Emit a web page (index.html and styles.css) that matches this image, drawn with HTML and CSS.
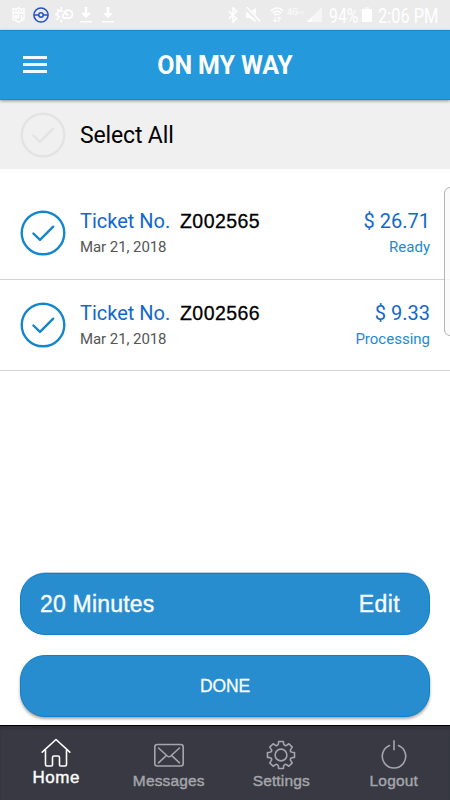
FILE: index.html
```html
<!DOCTYPE html>
<html lang="en">
<head>
<meta charset="utf-8">
<title>On My Way</title>
<link rel="stylesheet" href="styles.css">
</head>
<body>
<svg class="defs" width="0" height="0">
  <symbol id="check" viewBox="0 0 46 46">
    <circle cx="23" cy="23" r="21.3"/>
    <path d="M13.4 23.5l6.6 6.4 13.2-13.2"/>
  </symbol>
  <symbol id="download" viewBox="0 0 12 16">
    <path fill="#fff" d="M4.7 0h2.6v6H11l-5 5.3L1 6h3.7zM0 14h12v1.6H0z"/>
  </symbol>
</svg>
<div class="app">
  <div class="status">
    <svg class="nfl" width="13" height="16" viewBox="0 0 13 16">
      <path d="M1 1.5l3 .8 2.5-1.6L9 2.3l3-.8v11.3l-3 .9-2.5 1.6L4 13.7l-3-.9zM1 6h11M4 3v2M6.5 2.5V5M9 3v2M3 12V8l1.7 4V8M6.2 12V8h1.6M6.2 10h1.4M9.5 8v4h1.5"/>
    </svg>
    <svg class="ball" width="16" height="16" viewBox="0 0 16 16">
      <circle cx="8" cy="8" r="7.1"/><circle cx="8" cy="8" r="2.2"/><path d="M1 8h4.8M10.2 8H15"/>
    </svg>
    <svg class="weather" width="18" height="16" viewBox="0 0 18 16">
      <path d="M8 4.6a3.400 3.400 0 1 0-2.600 5.800M6.300 0v2.200M2 2l1.500 1.500M0 7.500h2M1.800 12.600l1.500-1.500M6.300 12.800V15"/>
      <path d="M7.400 11.200h6a4 4 0 1 0-3.900-4.800M12.500 8.800a2.300 2.300 0 1 0-4.600 0 2.300 2.300 0 0 0 2 2.400"/>
    </svg>
    <svg class="dl" width="12" height="16"><use href="#download"/></svg>
    <svg class="dl" width="12" height="16"><use href="#download"/></svg>
    <div class="status-right">
      <svg width="10" height="16" viewBox="0 0 10 16"><path d="M.8 4.2l7.8 7.3L5 15V1l3.6 3.5L.8 11.8"/></svg>
      <svg class="mute" width="15" height="16" viewBox="0 0 15 16"><path class="solid" d="M0 5h3.5L10 1v14l-6.500-4H0z"/><path class="slash" d="M0 .8l14 14"/><path d="M.7 0l13.5 14.5"/></svg>
      <svg class="wifi" width="14" height="16" viewBox="0 0 14 16"><path d="M.8 4Q7-2 13.200 4M2.800 6.200Q7 2 11.200 6.200M4.800 8.300Q7 6 9.200 8.300"/><path class="thin" d="M5 10v5M3 13l2 2 2-2M9 15v-5M7.500 12L9 10l2 2"/></svg>
      <span class="lte">4G<small>LTE</small></span>
      <svg class="signal" width="15" height="15" viewBox="0 0 15 15"><path class="faint" d="M0 15L15 0v15z"/><path class="solid" d="M0 15l5-5v5z"/></svg>
      <span class="percent">94%</span>
      <svg class="battery" width="10" height="16" viewBox="0 0 10 16"><path class="faint" d="M3 0h4v2H3z"/><path class="solid" d="M0 2h10v13H0z"/></svg>
      <span class="time">2:06 PM</span>
    </div>
  </div>

  <header class="header">
    <div class="burger"><i></i><i></i><i></i></div>
    <h1>ON MY WAY</h1>
  </header>

  <div class="select-all">
    <svg class="check off"><use href="#check"/></svg>
    <span>Select All</span>
  </div>

  <main class="tickets">
    <div class="ticket">
      <svg class="check"><use href="#check"/></svg>
      <div class="info">
        <div class="line"><span class="label">Ticket No.</span><span class="number">Z002565</span></div>
        <div class="date">Mar 21, 2018</div>
      </div>
      <div class="cost"><div class="price">$ 26.71</div><div class="state">Ready</div></div>
    </div>
    <div class="ticket">
      <svg class="check"><use href="#check"/></svg>
      <div class="info">
        <div class="line"><span class="label">Ticket No.</span><span class="number">Z002566</span></div>
        <div class="date">Mar 21, 2018</div>
      </div>
      <div class="cost"><div class="price">$ 9.33</div><div class="state">Processing</div></div>
    </div>
    <div class="edge-handle"></div>
  </main>

  <div class="actions">
    <div class="pill eta"><span>20 Minutes</span><span class="edit">Edit</span></div>
    <div class="pill done"><span>DONE</span></div>
  </div>

  <nav class="tabs">
    <div class="tab active">
      <svg width="30" height="30" viewBox="0 0 30 30"><path d="M1.200 14.200L15 1.500l13.800 12.700M4.500 12v14.500q0 1.500 1.500 1.500h4.500q1 0 1-1V19.500q0-1.500 1.500-1.500h4q1.500 0 1.500 1.500V27q0 1 1 1H24q1.500 0 1.500-1.500V12"/></svg>
      <span>Home</span>
    </div>
    <div class="tab">
      <svg width="30" height="30" viewBox="0 0 30 30"><rect x=".8" y="4.500" width="28.400" height="21.500" rx="2.500"/><path d="M4.500 8l8.800 8q1.700 1.500 3.400 0l8.800-8M4.500 22.800l8-7.500M25.500 22.800l-8-7.500"/></svg>
      <span>Messages</span>
    </div>
    <div class="tab">
      <svg width="30" height="30" viewBox="-15 -15 30 30"><circle r="5.900"/><path d="M-3-10.300Q-2.400-11-2.400-13.500H2.400Q2.400-11 3-10.300Q4.500-9 5.160-9.400L7.850-11.240L11.240-7.850L9.400-5.160Q9-4 10.300-3Q11-2.400 13.500-2.400V2.400Q11 2.400 10.300 3Q9 4 9.400 5.160L11.240 7.850L7.850 11.240L5.160 9.400Q4.500 9 3 10.300Q2.400 11 2.400 13.500H-2.400Q-2.400 11-3 10.300Q-4.500 9-5.160 9.400L-7.850 11.240L-11.240 7.850L-9.400 5.160Q-9 4-10.300 3Q-11 2.400-13.500 2.400V-2.400Q-11-2.400-10.300-3Q-9-4-9.400-5.160L-11.240-7.850L-7.850-11.240L-5.160-9.400Q-4.500-9-3-10.300z"/></svg>
      <span>Settings</span>
    </div>
    <div class="tab">
      <svg width="30" height="30" viewBox="0 0 30 30"><path d="M10.500 5.500a11.700 11.700 0 1 0 9 0M15 .8v9"/></svg>
      <span>Logout</span>
    </div>
  </nav>
</div>
</body>
</html>
```
FILE: styles.css
```css
* { box-sizing: border-box; }
body { margin: 0; background: #fff; font-family: Roboto, sans-serif; }
svg { display: block; flex: none; }
.defs { position: absolute; }
.app { width: 450px; height: 800px; display: flex; flex-direction: column; overflow: hidden; }

.status { height: 30px; background: #ebebeb; display: flex; align-items: center; padding: 0 13px 1px 12px; color: #fff; }
.status svg { fill: none; stroke: #fff; stroke-width: 1.5; }
.status .nfl { stroke-width: 1.3; }
.status .ball { stroke: #2450c8; margin-left: 8px; }
.status .weather { margin-left: 6px; stroke-width: 1.7; }
.status .dl { margin-left: 7px; stroke: none; }
.status .dl + .dl { margin-left: 10px; }
.status-right { margin-left: auto; display: flex; align-items: center; }
.status .solid { fill: #fff; stroke: none; }
.status .faint { fill: #f6f6f6; stroke: none; }
.status .slash { stroke: #ebebeb; stroke-width: 4; }
.status .mute { margin-left: 8px; }
.status .wifi { margin-left: 9px; }
.status .thin { stroke-width: 1; }
.lte { width: 19px; margin-left: 3px; font-size: 9px; font-weight: 500; line-height: 9px; color: #fafafa; height: 14px; white-space: nowrap; }
.lte small { font-size: 4px; vertical-align: 1px; }
.status .signal { margin-left: 1px; }
.percent, .time { font-size: 20px; line-height: 28px; white-space: nowrap; transform-origin: left center; }
.percent { width: 29px; margin-left: 7px; transform: translateY(1px) scaleX(.79); }
.status .battery { margin-left: 4px; }
.time { width: 59px; margin-left: 6px; transform: translateY(1px) scaleX(.82); }

.header { position: relative; z-index: 1; height: 70px; background: #2499db; border-top: 1px solid #118bd2; border-bottom: 1px solid #118bd2; box-shadow: 0 1px 3px rgba(0,0,0,.4); display: flex; align-items: center; justify-content: center; }
.burger { position: absolute; left: 23px; top: 25px; display: grid; gap: 4px; }
.burger i { width: 24px; height: 3px; background: #f2f8ff; }
.header h1 { margin: 2px 0 0; color: #fff; font-size: 25px; font-weight: 700; line-height: 30px; letter-spacing: -.1px; }

.check { width: 46px; height: 46px; fill: none; stroke: #1486cd; stroke-width: 2.4; stroke-linecap: round; stroke-linejoin: round; }
.check.off { stroke: #e3e3e3; }
.select-all { height: 69px; background: #f0f0f0; display: flex; align-items: center; padding-left: 20px; gap: 14px; font-size: 23px; letter-spacing: -.15px; color: #000; }
.select-all span { padding-top: 2px; }

.tickets { position: relative; padding-top: 19px; }
.ticket { height: 91.500px; border-bottom: 1px solid #d3d3d3; display: flex; align-items: center; padding: 0 20px; }
.info { margin-left: 14px; flex: 1; }
.line { display: flex; align-items: baseline; height: 28px; line-height: 26px; font-size: 20px; }
.label { color: #1268cd; width: 100px; }
.number { font-family: "Liberation Sans", sans-serif; -webkit-text-stroke: .3px #000; font-size: 19.500px; letter-spacing: .45px; }
.date { font-size: 15px; line-height: 20px; height: 22px; color: #555; padding-top: 1px; letter-spacing: -.07px; }
.cost { text-align: right; }
.price { font-size: 20px; line-height: 26px; height: 28px; color: #1268cd; }
.state { font-size: 15px; line-height: 20px; height: 22px; color: #1a8bd2; padding-top: 1px; }
.edge-handle { position: absolute; right: -6px; top: 18px; width: 12px; height: 149px; border: 1px solid #b5b5b5; border-radius: 8px; background: rgba(250,250,250,.8); }

.actions { margin-top: auto; padding: 0 20px 8px; display: grid; gap: 20px; font-family: "Liberation Sans", sans-serif; color: #f8fcff; }
.pill { height: 62px; border-radius: 25px; background: #278dcf; border: 1px solid #0d80cb; display: flex; align-items: center; padding: 0 29px 0 19px; }
.eta { justify-content: space-between; font-size: 23px; letter-spacing: .2px; border-top-color: #0d80cb; box-shadow: 0 -1px 0 -.3px #a5bfdc; -webkit-text-stroke: .4px #f8fcff; }
.edit { letter-spacing: .4px; }
.done { justify-content: center; padding: 0 19px; font-size: 17.500px; letter-spacing: -.2px; box-shadow: 0 2px 3px rgba(0,0,0,.35); -webkit-text-stroke: .3px #f8fcff; }
.done span { padding-top: 1px; }

.tabs { height: 75px; flex: none; background: #383943; border-top: 1px solid #000; box-shadow: inset 0 3px 2px #30313a; display: grid; grid-template-columns: repeat(4, 1fr); font-family: "Liberation Sans", sans-serif; color: #a5a6ab; }
.tab { display: flex; flex-direction: column; align-items: center; padding-top: 14px; font-size: 15.500px; letter-spacing: .15px; line-height: 20px; -webkit-text-stroke: .4px currentColor; }
.tab svg { fill: none; stroke: currentColor; stroke-width: 1.6; stroke-linecap: round; stroke-linejoin: round; }
.tab span { margin-top: 1px; }
.active { color: #fff; font-size: 17px; letter-spacing: .6px; padding-top: 12px; }
.active span { margin-top: 0; }
```
